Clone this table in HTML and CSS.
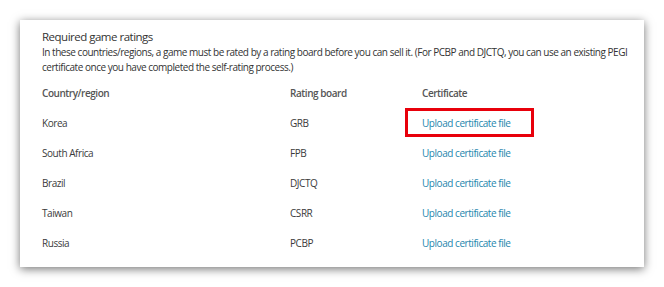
FILE: index.html
```html
<!DOCTYPE html>
<html lang="en">

<head>
    <meta charset="UTF-8">
    <meta name="viewport" content="width=device-width, initial-scale=1.0">
    <title>Required game ratings</title>

    <link rel="stylesheet" href="styles.css">

</head>

<body>

    <div class="card">

        <h2 class="titulo">Required game ratings</h2>
        <p class="descricao">In these countries/regions, a game must be rated by a rating board before you can sell it. (For PCBP and DJCTQ, you can use an existing PEGI certificate once you have completed the self-rating process.)</p>

        <div class="tabela">
            <div class="cabecalho">Country/region</div>
            <div class="cabecalho">Rating board</div>
            <div class="cabecalho">Certificate</div>

            <div class="celula">Korea</div>
            <div class="celula">GRB</div>
            <div class="celula"><a href="#" class="upload destaque">Upload certificate file</a></div>

            <div class="celula">South Africa</div>
            <div class="celula">FPB</div>
            <div class="celula"><a href="#" class="upload">Upload certificate file</a></div>

            <div class="celula">Brazil</div>
            <div class="celula">DJCTQ</div>
            <div class="celula"><a href="#" class="upload">Upload certificate file</a></div>

            <div class="celula">Taiwan</div>
            <div class="celula">CSRR</div>
            <div class="celula"><a href="#" class="upload">Upload certificate file</a></div>

            <div class="celula">Russia</div>
            <div class="celula">PCBP</div>
            <div class="celula"><a href="#" class="upload">Upload certificate file</a></div>
        </div>

    </div>

</body>

</html>
```

FILE: styles.css
```css
body {
    margin: 0;
    padding: 20px;
    background-color: #ffffff;
    font-family: 'Open Sans', sans-serif;
    color: #3b3b3b;
}

.card {
    width: 624px;
    height: 247px;
    box-sizing: border-box;
    padding: 8px 4px 0 22px;
    background-color: #ffffff;
    box-shadow: 0 2px 9px rgba(0, 0, 0, 0.55);
}

.titulo {
    margin: 0;
    font-size: 11.5px;
    font-weight: normal;
    letter-spacing: -0.5px;
    line-height: 17px;
    color: #333;
}

.descricao {
    margin: 0;
    font-size: 10px;
    letter-spacing: -0.47px;
    line-height: 15px;
    color: #333;
}

.tabela {
    display: grid;
    grid-template-columns: 248px 132px auto;
    grid-auto-rows: 30px;
    margin-top: 3px;
    font-size: 10px;
    letter-spacing: -0.45px;
}

.cabecalho,
.celula {
    display: flex;
    align-items: center;
}

.cabecalho {
    font-weight: 600;
    color: #555;
}

.upload {
    color: #1e86ad;
    text-decoration: none;
    position: relative;
}

/* moldura vermelha sobre o primeiro link */
.destaque::after {
    content: "";
    position: absolute;
    left: -17px;
    right: -23px;
    top: -8px;
    bottom: -7px;
    border: 3px solid #e8000b;
}
```
